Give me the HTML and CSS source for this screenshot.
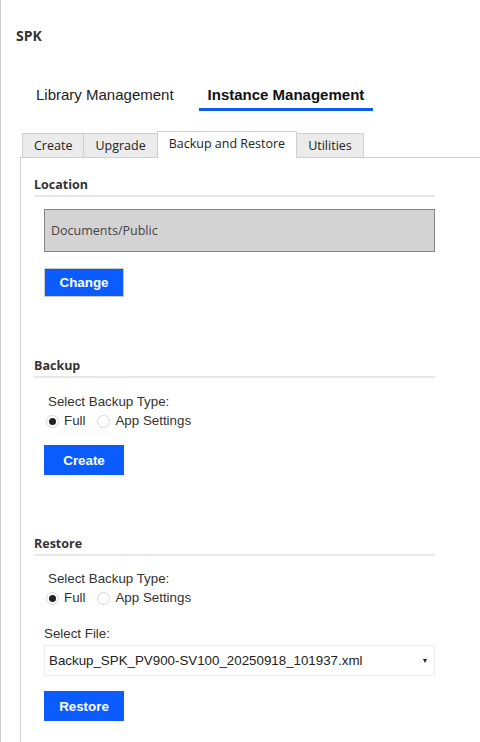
FILE: index.html
```html
<!DOCTYPE html>
<html lang="en">
<head>
<meta charset="utf-8">
<title>SPK</title>
<link rel="stylesheet" href="styles.css">
</head>
<body>
<div class="app">
  <h1 class="title">SPK</h1>
  <nav class="nav">
    <span class="nav-item">Library Management</span>
    <span class="nav-item active">Instance Management</span>
  </nav>
  <div class="content">
    <div class="tabs">
      <span class="tab">Create</span>
      <span class="tab">Upgrade</span>
      <span class="tab active">Backup and Restore</span>
      <span class="tab">Utilities</span>
    </div>
    <div class="panel">
      <section class="section first">
        <h2 class="section-title">Location</h2>
        <div class="section-body">
          <div class="location-box">Documents/Public</div>
          <button class="btn btn-bordered mt-16">Change</button>
        </div>
      </section>

      <section class="section">
        <h2 class="section-title">Backup</h2>
        <div class="section-body">
          <div class="field-label indent">Select Backup Type:</div>
          <div class="radio-row">
            <span class="radio checked"></span><span class="radio-label">Full</span>
            <span class="radio"></span><span class="radio-label">App Settings</span>
          </div>
          <button class="btn mt-15">Create</button>
        </div>
      </section>

      <section class="section">
        <h2 class="section-title">Restore</h2>
        <div class="section-body">
          <div class="field-label indent tight">Select Backup Type:</div>
          <div class="radio-row">
            <span class="radio checked"></span><span class="radio-label">Full</span>
            <span class="radio"></span><span class="radio-label">App Settings</span>
          </div>
          <div class="file-label">Select File:</div>
          <div class="select">
            <span class="select-value">Backup_SPK_PV900-SV100_20250918_101937.xml</span>
            <span class="caret"></span>
          </div>
          <button class="btn mt-15">Restore</button>
        </div>
      </section>
    </div>
  </div>
</div>
</body>
</html>
```

FILE: styles.css
```css
html, body {
  margin: 0;
  padding: 0;
  background: #ffffff;
}

body {
  width: 480px;
  height: 742px;
  overflow: hidden;
  font-family: "Liberation Sans", Arial, sans-serif;
  color: #333333;
}

.app {
  border-left: 1px solid #cccccc;
  min-height: 742px;
  box-sizing: border-box;
  display: flex;
  flex-direction: column;
}

.title {
  margin: 27px 0 0 0;
  padding-left: 15px;
  font-family: "Open Sans", "Noto Sans", sans-serif;
  font-weight: 700;
  font-size: 14px;
  line-height: 18px;
  color: #333333;
}

.nav {
  display: flex;
  gap: 16px;
  margin-top: 41px;
  padding-left: 26px;
}

.nav-item {
  font-family: "Liberation Sans", Arial, sans-serif;
  font-size: 15px;
  line-height: 18px;
  padding: 0 9px 4px 9px;
  border-bottom: 3px solid transparent;
  color: #222222;
}

.nav-item.active {
  font-weight: 700;
  color: #111111;
  border-bottom-color: #0b5cf5;
}

.content {
  margin-top: 20px;
  margin-left: 19px;
  display: flex;
  flex-direction: column;
  flex: 1;
}

.tabs {
  display: flex;
  align-items: flex-end;
  padding-left: 2px;
  margin-bottom: -1px;
  position: relative;
  z-index: 1;
}

.tab {
  font-family: "Open Sans", "Noto Sans", sans-serif;
  font-size: 12.5px;
  line-height: 23px;
  padding: 0 11px;
  background: #ebebeb;
  border: 1px solid #d0d0d0;
  color: #222222;
  margin-left: -1px;
}

.tab:first-child {
  margin-left: 0;
}

.tab.active {
  background: #ffffff;
  border-bottom: none;
  padding-bottom: 3px;
  position: relative;
  z-index: 2;
}

.panel {
  flex: 1;
  border-left: 1px solid #d0d0d0;
  border-top: 1px solid #d0d0d0;
  padding: 18px 45px 0 13px;
}

.section {
  margin-top: 60px;
}

.section.first {
  margin-top: 0;
}

.section-title {
  margin: 0;
  font-family: "Open Sans", "Noto Sans", sans-serif;
  font-weight: 700;
  font-size: 12.5px;
  line-height: 18px;
  padding-bottom: 1px;
  border-bottom: 2px solid #e8e8e8;
  color: #333333;
}

.section-body {
  margin-left: 10px;
  display: flex;
  flex-direction: column;
  align-items: flex-start;
}

.location-box {
  margin-top: 12px;
  align-self: stretch;
  height: 41px;
  display: flex;
  align-items: center;
  padding: 0 6px;
  background: #d3d3d3;
  border: 1px solid #858585;
  font-family: "Open Sans", "Noto Sans", sans-serif;
  font-size: 12.5px;
  color: #444444;
}

.btn {
  width: 80px;
  height: 30px;
  border: none;
  background: #0b5cff;
  color: #ffffff;
  font-family: "Liberation Sans", Arial, sans-serif;
  font-weight: 700;
  font-size: 13.33px;
  padding: 0;
  cursor: pointer;
}

.btn-bordered {
  height: 29px;
  border: 1px solid #c8c8c8;
}

.mt-16 {
  margin-top: 16px;
}

.mt-15 {
  margin-top: 15px;
}

.field-label {
  margin-top: 14px;
  font-size: 13.33px;
  line-height: 19px;
  padding-bottom: 1px;
  color: #333333;
}

.field-label.tight {
  margin-top: 13px;
}

.indent {
  padding-left: 4px;
}

.radio-row {
  display: flex;
  align-items: center;
  height: 18px;
  padding-left: 2px;
  font-size: 13.33px;
  color: #333333;
}

.radio {
  width: 11px;
  height: 11px;
  border: 1px solid #d6d6d6;
  border-radius: 50%;
  background: #ffffff;
  display: flex;
  align-items: center;
  justify-content: center;
  flex: none;
}

.radio.checked::after {
  content: "";
  width: 7px;
  height: 7px;
  border-radius: 50%;
  background: #222222;
}

.radio-label {
  margin-left: 5px;
  margin-right: 12px;
  line-height: 18px;
}

.file-label {
  margin-top: 18px;
  font-size: 13.33px;
  line-height: 18px;
  color: #333333;
}

.select {
  margin-top: 2px;
  align-self: stretch;
  height: 29px;
  border: 1px solid #ececec;
  display: flex;
  align-items: center;
  justify-content: space-between;
  padding: 0 7px 0 4px;
  font-size: 13.33px;
  color: #222222;
}

.caret {
  width: 0;
  height: 0;
  border-left: 2.5px solid transparent;
  border-right: 2.5px solid transparent;
  border-top: 4px solid #222222;
}
```
